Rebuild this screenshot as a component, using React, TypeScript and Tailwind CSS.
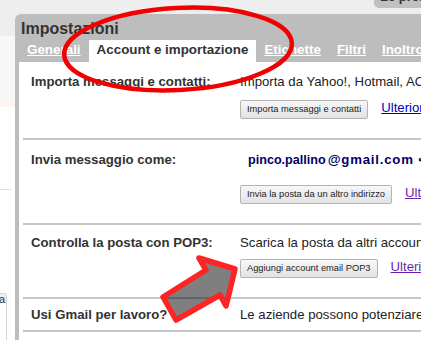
import React from "react";

type Row = {
  label: string;
  value: React.ReactNode;
  button?: string;
  link?: string;
  linkColor?: string;
  pad: string;
  gap?: string;
  pb: string;
};

const rows: Row[] = [
  {
    label: "Importa messaggi e contatti:",
    value: <span>Importa da Yahoo!, Hotmail, AOL o altri account webmail o POP3.</span>,
    button: "Importa messaggi e contatti",
    link: "Ulteriori informazioni",
    linkColor: "text-[#0000cc]",
    pad: "pt-[12px]",
    gap: "mt-[11px]",
    pb: "pb-[19px]",
  },
  {
    label: "Invia messaggio come:",
    value: (
      <span className="pl-[8px] font-bold text-[#000066]">
        <span className="text-[12.6px]">pinco.pallino</span>
        <span className="ml-[2px] tracking-[0.8px]">@gmail.com &lt;</span>
      </span>
    ),
    button: "Invia la posta da un altro indirizzo",
    link: "Ulteriori informazioni",
    linkColor: "text-[#6a1fb0]",
    pad: "pt-[12px]",
    gap: "mt-[17px]",
    pb: "pb-[19px]",
  },
  {
    label: "Controlla la posta con POP3:",
    value: <span>Scarica la posta da altri account POP3.</span>,
    button: "Aggiungi account email POP3",
    link: "Ulteriori informazioni",
    linkColor: "text-[#6a1fb0]",
    pad: "pt-[10px]",
    gap: "mt-[9px]",
    pb: "pb-[19px]",
  },
  {
    label: "Usi Gmail per lavoro?",
    value: <span>Le aziende possono potenziare Gmail con Google Apps.</span>,
    pad: "pt-[8px]",
    pb: "pb-[8px]",
  },
];

const tabs = ["Generali", "Account e importazione", "Etichette", "Filtri", "Inoltro e POP/IMAP"];

export default function App() {
  return (
    <div className="relative w-[421px] h-[340px] overflow-hidden bg-white font-['Liberation_Sans',Arial,sans-serif]">
      <div className="flex h-full">
        {/* sinistra, navigazione nascosta */}
        <div className="w-[15px] shrink-0 flex flex-col">
          <div className="h-[36px] bg-[#eeeeee]" />
          <div className="h-[61px] bg-[#f7f7f7]" />
          <div className="h-[10px] bg-[#fdf4f4]" />
          <div className="h-[82px]" />
          <div className="h-px w-[11px] bg-[#dedede]" />
          <div className="h-[103px]" />
          <div className="w-[7px] flex-1 border-t border-r border-[#d6d6d6] rounded-tr-[3px] overflow-hidden">
            <div className="h-[9px] bg-[#eeeeee] text-[11px] leading-[10px] text-[#333] -ml-[1px]">a</div>
          </div>
        </div>

        <div className="flex-1 flex flex-col bg-[#eeeeee] min-w-0">
          <div className="h-[14px] flex justify-end">
            <div className="w-[47px] h-[8px] bg-[#c0c0c0] rounded-bl-[5px] overflow-hidden">
              <div className="-mt-[11px] pl-[6px] text-[13px] leading-[15px] font-bold text-[#333] whitespace-nowrap">Le preferenze</div>
            </div>
          </div>

          <div className="flex-1 flex flex-col bg-[#bdbdbd] rounded-tl-[6px]">
            <div className="h-[26px] pt-[6px] pl-[6px] text-[16px] leading-[18px] font-bold text-[#333]">Impostazioni</div>

            <div className="h-[22px] flex pl-[4px] text-[13.4px] leading-[16px] font-bold whitespace-nowrap">
              {tabs.map((t, i) =>
                i === 1 ? (
                  <div key={t} className="px-[8px] bg-white text-[#333] flex items-center pb-[2px]">{t}</div>
                ) : (
                  <div key={t} className="px-[8px] text-white underline flex items-center pb-[2px]">{t}</div>
                )
              )}
            </div>

            <div className="flex-1 ml-[4px] bg-white pl-[4px]">
              {rows.map((r) => (
                <div key={r.label} className={`border-b-2 border-[#c6c6c6] pl-[8px] ${r.pad} ${r.pb}`}>
                  <div className="flex text-[13.2px] leading-[15px] whitespace-nowrap">
                    <div className="w-[209px] shrink-0 font-bold text-[#333]">{r.label}</div>
                    <div className="flex-1 min-w-0 text-[#222]">
                      {r.value}
                      {r.button && (
                        <div className={`flex items-start ${r.gap}`}>
                          <div className="h-[19px] px-[6px] flex items-center border border-[#b4b4b4] rounded-[2px] bg-linear-to-b from-[#f8f8f8] to-[#e2e2e2] text-[9.3px] text-[#222]">
                            {r.button}
                          </div>
                          <span className={`ml-[13px] underline ${r.linkColor}`}>{r.link}</span>
                        </div>
                      )}
                    </div>
                  </div>
                </div>
              ))}
            </div>
          </div>
        </div>
      </div>

      {/* annotazioni sopra la pagina */}
      <svg className="absolute inset-0 pointer-events-none" width="421" height="340" viewBox="0 0 421 340">
        <ellipse cx="178" cy="49" rx="114" ry="41" transform="rotate(-3 178 49)" fill="none" stroke="#f00000" strokeWidth="4.5" />
        <polygon
          points="199,258 235,269 226,306 220,295 176,320 163,297 206,270"
          fill="rgba(0,0,0,0.5)"
          stroke="#ff2424"
          strokeWidth="5.5"
          strokeLinejoin="round"
        />
      </svg>
    </div>
  );
}
